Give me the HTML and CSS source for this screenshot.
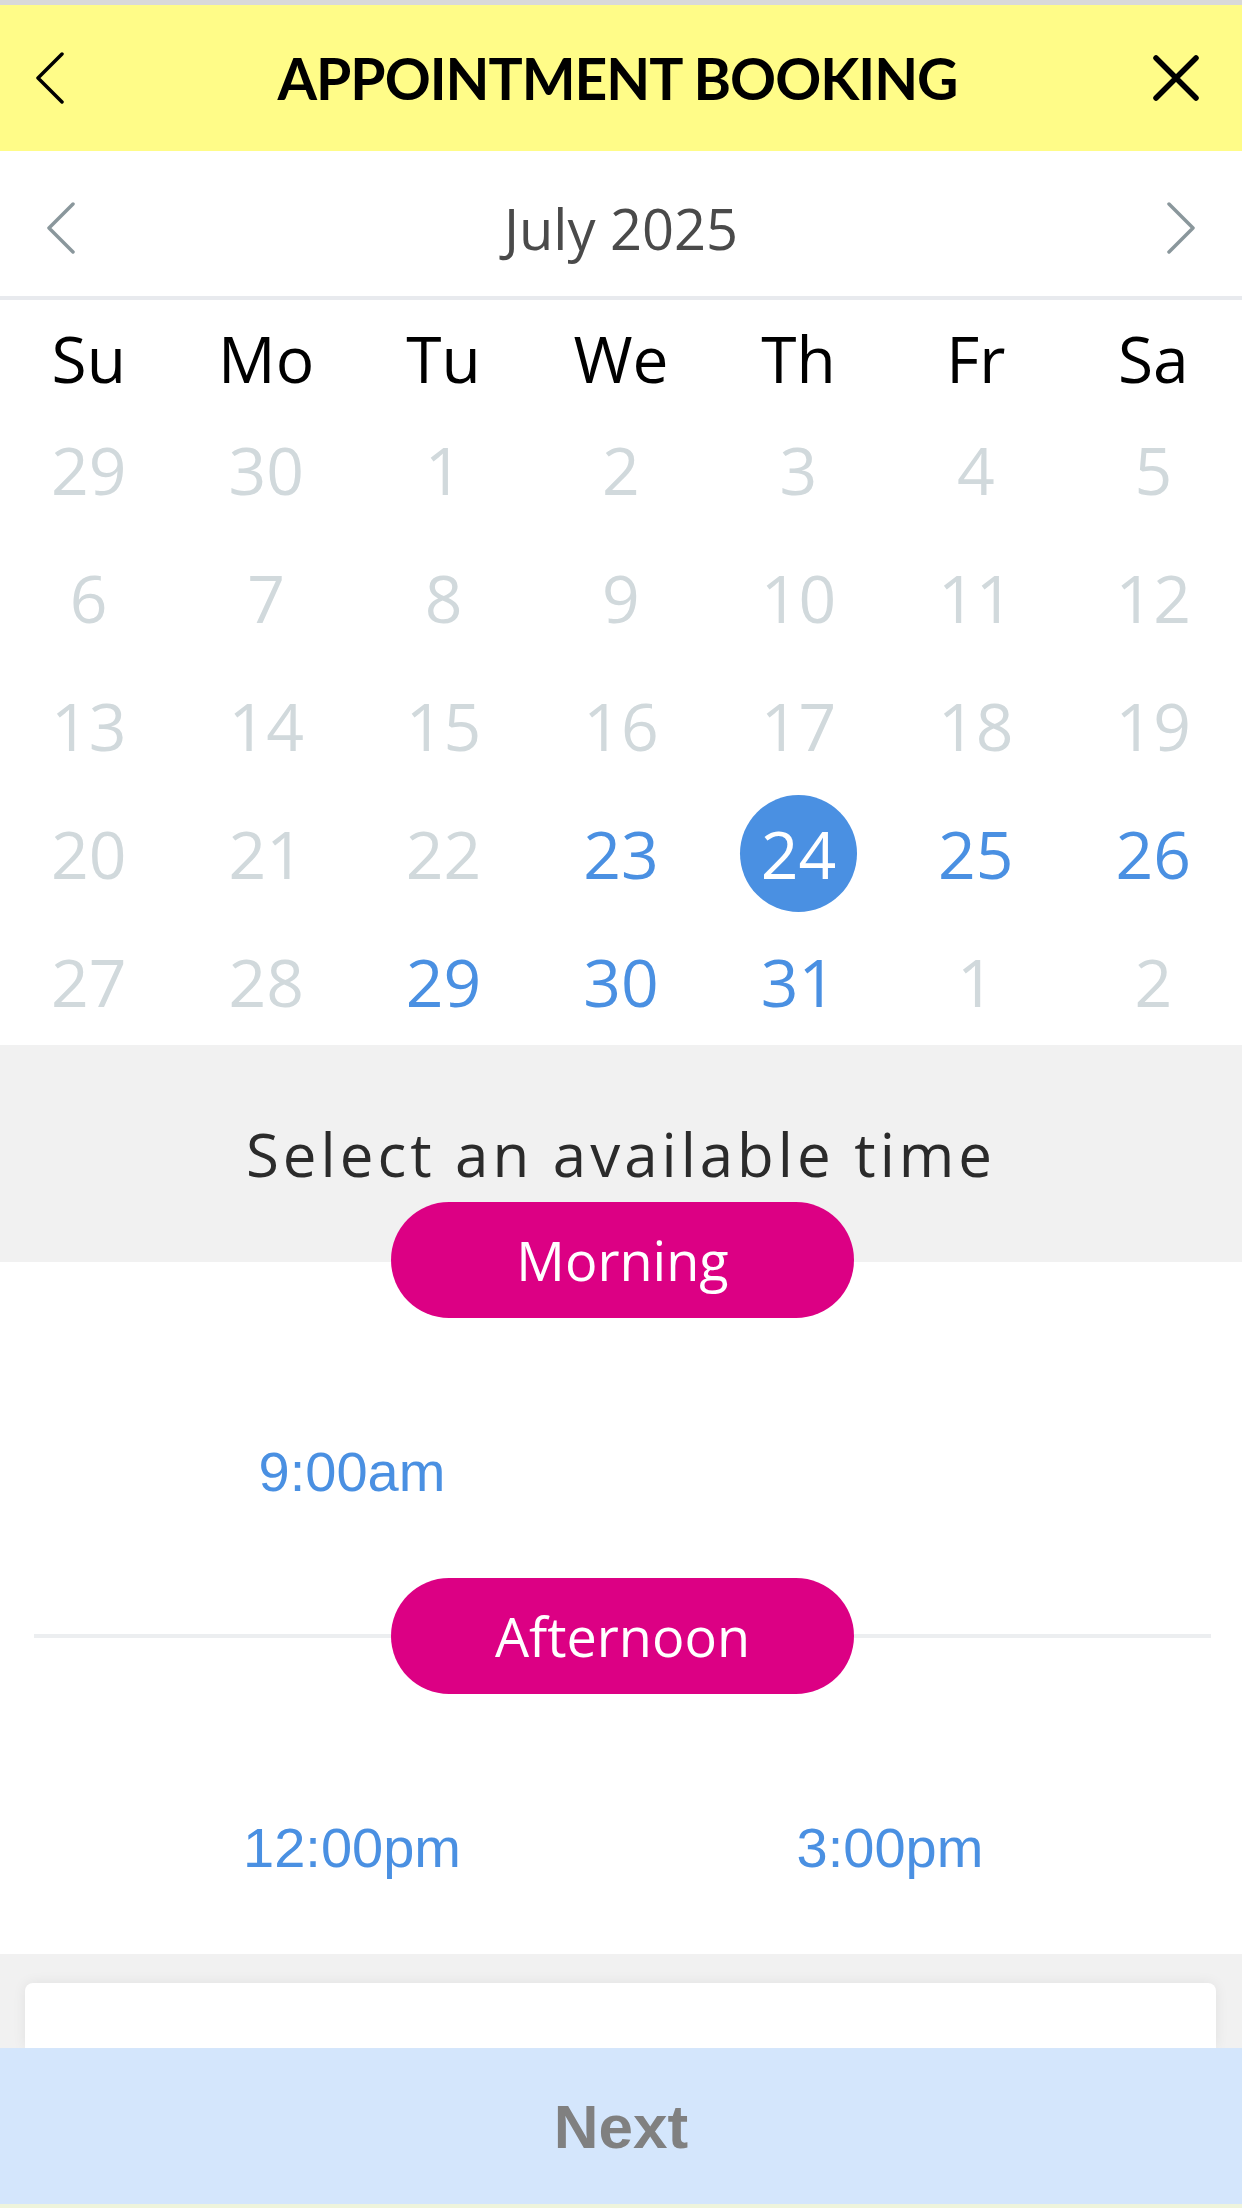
FILE: index.html
```html
<!DOCTYPE html>
<html>
<head>
    <title>Appointment Booking</title>
    <link rel="stylesheet" href="styles.css">
</head>
<body>
    <div class="status-line"></div>
    <div class="appbar">
        <svg class="back" width="30" height="52" viewBox="0 0 30 52"><path d="M27 2 L3 26 L27 50" /></svg>
        <h1>APPOINTMENT BOOKING</h1>
        <svg class="close" width="48" height="48" viewBox="0 0 48 48"><path d="M4 4 L44 44 M44 4 L4 44" /></svg>
    </div>

    <div class="month-nav">
        <svg class="chev" width="30" height="52" viewBox="0 0 30 52"><path d="M27 2 L3 26 L27 50" /></svg>
        <div class="month">July 2025</div>
        <svg class="chev" width="30" height="52" viewBox="0 0 30 52"><path d="M3 2 L27 26 L3 50" /></svg>
    </div>

    <div class="calendar">
        <div class="weekdays">
            <div>Su</div><div>Mo</div><div>Tu</div><div>We</div><div>Th</div><div>Fr</div><div>Sa</div>
        </div>
        <div class="days">
            <div class="day">29</div><div class="day">30</div><div class="day">1</div><div class="day">2</div><div class="day">3</div><div class="day">4</div><div class="day">5</div>
            <div class="day">6</div><div class="day">7</div><div class="day">8</div><div class="day">9</div><div class="day">10</div><div class="day">11</div><div class="day">12</div>
            <div class="day">13</div><div class="day">14</div><div class="day">15</div><div class="day">16</div><div class="day">17</div><div class="day">18</div><div class="day">19</div>
            <div class="day">20</div><div class="day">21</div><div class="day">22</div><div class="day open">23</div><div class="day selected"><span>24</span></div><div class="day open">25</div><div class="day open">26</div>
            <div class="day">27</div><div class="day">28</div><div class="day open">29</div><div class="day open">30</div><div class="day open">31</div><div class="day">1</div><div class="day">2</div>
        </div>
    </div>

    <div class="times-title">Select an available time</div>

    <div class="period first"><div class="pill">Morning</div></div>
    <div class="slots">
        <div class="slot">9:00am</div>
    </div>

    <div class="period"><div class="pill">Afternoon</div></div>
    <div class="slots">
        <div class="slot">12:00pm</div>
        <div class="slot">3:00pm</div>
    </div>

    <div class="footer-area">
        <div class="card"></div>
    </div>
    <div class="next">Next</div>
    <div class="bottom-strip"></div>
</body>
</html>
```

FILE: styles.css
```css
body {
    margin: 0;
    width: 1242px;
    font-family: "Open Sans", sans-serif;
    background-color: #ffffff;
}
.status-line {
    height: 5px;
    background-color: #d9d9d9;
}
.appbar {
    height: 146px;
    background-color: #fffc88;
    display: grid;
    grid-template-columns: 1fr auto 1fr;
    align-items: center;
    padding: 0 42px 0 35px;
}
.appbar h1 {
    margin: 0;
    font-family: Lato, sans-serif;
    font-weight: bold;
    font-size: 57px;
    letter-spacing: -1px;
    color: #000000;
}
.appbar svg path {
    fill: none;
    stroke: #000000;
    stroke-linecap: round;
    stroke-linejoin: round;
}
.back path {
    stroke-width: 3.5;
}
.close {
    justify-self: end;
}
.close path {
    stroke-width: 5.5;
}
.month-nav {
    height: 149px;
    border-bottom: 4px solid #e8eaee;
    display: flex;
    align-items: center;
    justify-content: space-between;
    padding: 8px 46px 0 46px;
    box-sizing: border-box;
}
.month {
    font-size: 56px;
    color: #4a4a4a;
}
.chev path {
    fill: none;
    stroke: #8a979c;
    stroke-width: 3.5;
    stroke-linecap: round;
    stroke-linejoin: round;
}
.weekdays {
    display: grid;
    grid-template-columns: repeat(7, 1fr);
    height: 105px;
    padding-top: 12px;
    box-sizing: border-box;
    text-align: center;
    font-size: 64px;
    line-height: 93px;
    color: #000000;
}
.days {
    display: grid;
    grid-template-columns: repeat(7, 1fr);
    grid-auto-rows: 128px;
}
.day {
    display: flex;
    align-items: center;
    justify-content: center;
    font-size: 66px;
    color: #d1d9dc;
}
.day.open {
    color: #4a90e2;
}
.day.selected span {
    width: 117px;
    height: 117px;
    border-radius: 50%;
    background-color: #4a90e2;
    color: #ffffff;
    display: flex;
    align-items: center;
    justify-content: center;
}
.times-title {
    height: 217px;
    background-color: #f1f1f1;
    display: flex;
    align-items: center;
    justify-content: center;
    font-size: 60px;
    letter-spacing: 4px;
    color: #2b2b2b;
}
.period {
    display: flex;
    align-items: center;
    padding: 0 31px 0 34px;
}
.period::before,
.period::after {
    content: '';
    flex: 1;
    height: 4px;
    background-color: #eceef0;
}
.period.first {
    margin-top: -60px;
}
.period.first::before,
.period.first::after {
    background-color: transparent;
}
.pill {
    width: 463px;
    height: 116px;
    border-radius: 58px;
    background-color: #dc0084;
    color: #ffffff;
    font-size: 54px;
    display: flex;
    align-items: center;
    justify-content: center;
}
.slots {
    display: grid;
    grid-template-columns: 1fr 1fr;
    padding: 122px 83px 74px 83px;
}
.slot {
    text-align: center;
    font-family: "Liberation Sans", Arial, sans-serif;
    font-size: 56px;
    line-height: 64px;
    color: #4a90e2;
}
.footer-area {
    background-color: #f1f1f1;
    padding: 29px 26px 0 25px;
}
.card {
    height: 65px;
    background-color: #ffffff;
    border-radius: 8px 8px 0 0;
    box-shadow: 0 0 14px rgba(0, 0, 0, 0.07);
}
.next {
    height: 156px;
    background-color: #d4e6fc;
    display: flex;
    align-items: center;
    justify-content: center;
    font-family: "Liberation Sans", Arial, sans-serif;
    font-weight: bold;
    font-size: 62px;
    color: #808080;
}
.bottom-strip {
    height: 4px;
    background-color: #eef4dc;
}
```
